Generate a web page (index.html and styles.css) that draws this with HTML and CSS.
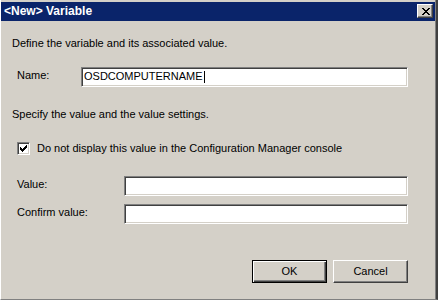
FILE: index.html
```html
<!DOCTYPE html>
<html lang="en">
<head>
    <meta charset="UTF-8">
    <title>&lt;New&gt; Variable</title>
    <link rel="stylesheet" href="styles.css">
</head>
<body>
    <div class="window">
        <div class="titlebar">
            <span class="title">&lt;New&gt; Variable</span>
            <span class="close-btn">
                <svg width="8" height="7" viewBox="0 0 8 7" shape-rendering="crispEdges">
                    <path d="M0 0h2v1h-2zM6 0h2v1h-2zM1 1h2v1h-2zM5 1h2v1h-2zM2 2h4v1h-4zM3 3h2v1h-2zM2 4h4v1h-4zM1 5h2v1h-2zM5 5h2v1h-2zM0 6h2v1h-2zM6 6h2v1h-2z" fill="#000"/>
                </svg>
            </span>
        </div>

        <div class="content">
            <div class="intro">Define the variable and its associated value.</div>

            <div class="field-row name-row">
                <span class="label">Name:</span>
                <div class="textbox"><span>OSDCOMPUTERNAME</span><span class="caret"></span></div>
            </div>

            <div class="intro spec">Specify the value and the value settings.</div>

            <div class="check-row">
                <span class="checkbox">
                    <svg width="7" height="7" viewBox="0 0 7 7" shape-rendering="crispEdges">
                        <path d="M0 2h1v3h-1zM1 3h1v3h-1zM2 4h1v3h-1zM3 3h1v3h-1zM4 2h1v3h-1zM5 1h1v3h-1zM6 0h1v3h-1z" fill="#000"/>
                    </svg>
                </span>
                <span>Do not display this value in the Configuration Manager console</span>
            </div>

            <div class="field-row value-row">
                <span class="label">Value:</span>
                <div class="textbox"></div>
            </div>
            <div class="field-row value-row confirm-row">
                <span class="label">Confirm value:</span>
                <div class="textbox"></div>
            </div>

            <div class="buttons">
                <button class="btn default">OK</button>
                <button class="btn">Cancel</button>
            </div>
        </div>
    </div>
</body>
</html>
```

FILE: styles.css
```css
body {
    margin: 0;
    background: #d4d0c8;
    font-family: "Liberation Sans", Arial, sans-serif;
    font-size: 11px;
    line-height: 13px;
    color: #000;
    overflow: hidden;
}
.window {
    width: 438px;
    height: 300px;
    box-sizing: border-box;
    background: #d4d0c8;
    border-left: 1px solid #fff;
    border-right: 2px solid #404040;
    border-bottom: 1px solid #808080;
    padding: 2px 1px 0 0;
    box-shadow: inset -1px 0 #808080;
    display: flex;
    flex-direction: column;
}
.titlebar {
    height: 19px;
    background: #0a246a;
    display: flex;
    align-items: flex-start;
    justify-content: space-between;
    flex-shrink: 0;
}
.title {
    color: #fff;
    font-weight: bold;
    font-size: 12px;
    line-height: 19px;
    padding-left: 3px;
}
.close-btn {
    width: 16px;
    height: 14px;
    box-sizing: border-box;
    margin: 2px 2px 0 0;
    background: #d4d0c8;
    border: 1px solid;
    border-color: #fff #404040 #404040 #fff;
    box-shadow: inset -1px -1px #808080;
    display: flex;
    align-items: center;
    justify-content: center;
}
.close-btn svg {
    display: block;
    margin-left: 1px;
}
.content {
    padding: 16px 27px 0 11px;
    display: flex;
    flex-direction: column;
}
.field-row {
    display: flex;
    align-items: flex-start;
    margin-left: 5px;
}
.name-row {
    margin-top: 17px;
}
.name-row .label {
    width: 64px;
}
.value-row {
    margin-top: 21px;
}
.value-row .label {
    width: 107px;
}
.confirm-row {
    margin-top: 8px;
}
.label {
    padding-top: 2px;
    flex-shrink: 0;
}
.textbox {
    flex: 1;
    height: 20px;
    box-sizing: border-box;
    background: #fff;
    border: 1px solid;
    border-color: #808080 #fff #fff #808080;
    box-shadow: inset 1px 1px #404040, inset -1px -1px #d4d0c8;
    padding-left: 2px;
    line-height: 15px;
    padding-top: 1px;
    display: flex;
    align-items: flex-start;
}
.caret {
    width: 1px;
    height: 12px;
    background: #000;
    margin: 2px 0 0 1px;
}
.spec {
    margin-top: 21px;
}
.check-row {
    display: flex;
    align-items: center;
    margin: 21px 0 0 5px;
}
.checkbox {
    width: 13px;
    height: 13px;
    box-sizing: border-box;
    background: #fff;
    border: 1px solid;
    border-color: #808080 #fff #fff #808080;
    box-shadow: inset 1px 1px #404040, inset -1px -1px #d4d0c8;
    margin-right: 7px;
    display: flex;
    align-items: center;
    justify-content: center;
}
.checkbox svg {
    display: block;
}
.buttons {
    display: flex;
    justify-content: flex-end;
    gap: 6px;
    margin-top: 36px;
}
.btn {
    width: 75px;
    height: 23px;
    box-sizing: border-box;
    padding: 0;
    font: inherit;
    color: #000;
    background: #d4d0c8;
    border: 1px solid;
    border-color: #fff #404040 #404040 #fff;
    box-shadow: inset -1px -1px #808080;
}
.btn.default {
    border-color: #000;
    box-shadow: inset 1px 1px #fff, inset -1px -1px #404040, inset -2px -2px #808080;
}
```
